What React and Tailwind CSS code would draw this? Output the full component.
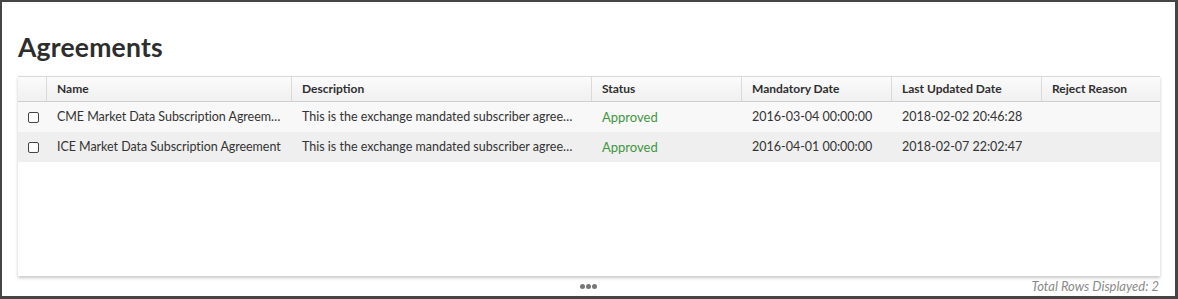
import React from "react";

const cols = [
  { label: "Name", w: "w-[245px]" },
  { label: "Description", w: "w-[300px]" },
  { label: "Status", w: "w-[150px]" },
  { label: "Mandatory Date", w: "w-[150px]" },
  { label: "Last Updated Date", w: "w-[150px]" },
  { label: "Reject Reason", w: "flex-1" },
];

const rows = [
  {
    name: "CME Market Data Subscription Agreement",
    desc: "This is the exchange mandated subscriber agreement for market data",
    status: "Approved",
    mand: "2016-03-04 00:00:00",
    upd: "2018-02-02 20:46:28",
    bg: "bg-[#f8f8f8]",
  },
  {
    name: "ICE Market Data Subscription Agreement",
    desc: "This is the exchange mandated subscriber agreement for market data",
    status: "Approved",
    mand: "2016-04-01 00:00:00",
    upd: "2018-02-07 22:02:47",
    bg: "bg-[#efefef]",
  },
];

export default function App() {
  return (
    <div className="w-[1178px] h-[299px] bg-white border-[#454545] border-t-2 border-l-2 border-r-[3px] border-b-[3px] font-['Lato',sans-serif] text-[#333] overflow-hidden">
      <div className="pl-[16px] pr-[15px]">
        <h1 className="pt-[30px] h-[74px] text-[26.5px] leading-[30px] font-bold text-[#2d2d2d] tracking-[0.2px]">
          Agreements
        </h1>
        <div className="h-[200px] bg-white border-t border-[#d9d9d9] shadow-[0_2px_3px_rgba(0,0,0,0.22)]">
          <div className="flex h-[25px] bg-gradient-to-b from-[#fbfbfb] to-[#f0f0f0] border-b border-[#cfcfcf]">
            <div className="w-[29px] border-r border-[#dadada]" />
            {cols.map((c) => (
              <div
                key={c.label}
                className={`${c.w} border-r border-[#dadada] last:border-r-0 px-[10px] flex items-center text-[12px] font-bold text-[#2f2f2f]`}
              >
                {c.label}
              </div>
            ))}
          </div>
          {rows.map((r) => (
            <div key={r.name} className={`flex h-[30px] items-center pt-[1px] text-[12.5px] ${r.bg}`}>
              <div className="w-[29px] flex justify-center pl-[1px]">
                <div className="w-[11px] h-[11px] border border-[#444] rounded-[2px] bg-white" />
              </div>
              <div className="w-[245px] pl-[10px] pr-[8px] truncate tracking-[-0.05px]">{r.name}</div>
              <div className="w-[300px] px-[10px] truncate">{r.desc}</div>
              <div className="w-[150px] px-[10px] text-[13px] text-[#3f963f]">{r.status}</div>
              <div className="w-[150px] px-[10px]">{r.mand}</div>
              <div className="w-[150px] px-[10px]">{r.upd}</div>
              <div className="flex-1 px-[10px]" />
            </div>
          ))}
        </div>
        <div className="relative h-[21px] flex items-center justify-end">
          <div className="absolute left-[562px] top-[8px] flex gap-[1px]">
            <span className="w-[5px] h-[5px] rounded-full bg-[#777]" />
            <span className="w-[5px] h-[5px] rounded-full bg-[#777]" />
            <span className="w-[5px] h-[5px] rounded-full bg-[#777]" />
          </div>
          <span className="text-[13px] italic text-[#8a8a8a] pr-[1px]">Total Rows Displayed: 2</span>
        </div>
      </div>
    </div>
  );
}
